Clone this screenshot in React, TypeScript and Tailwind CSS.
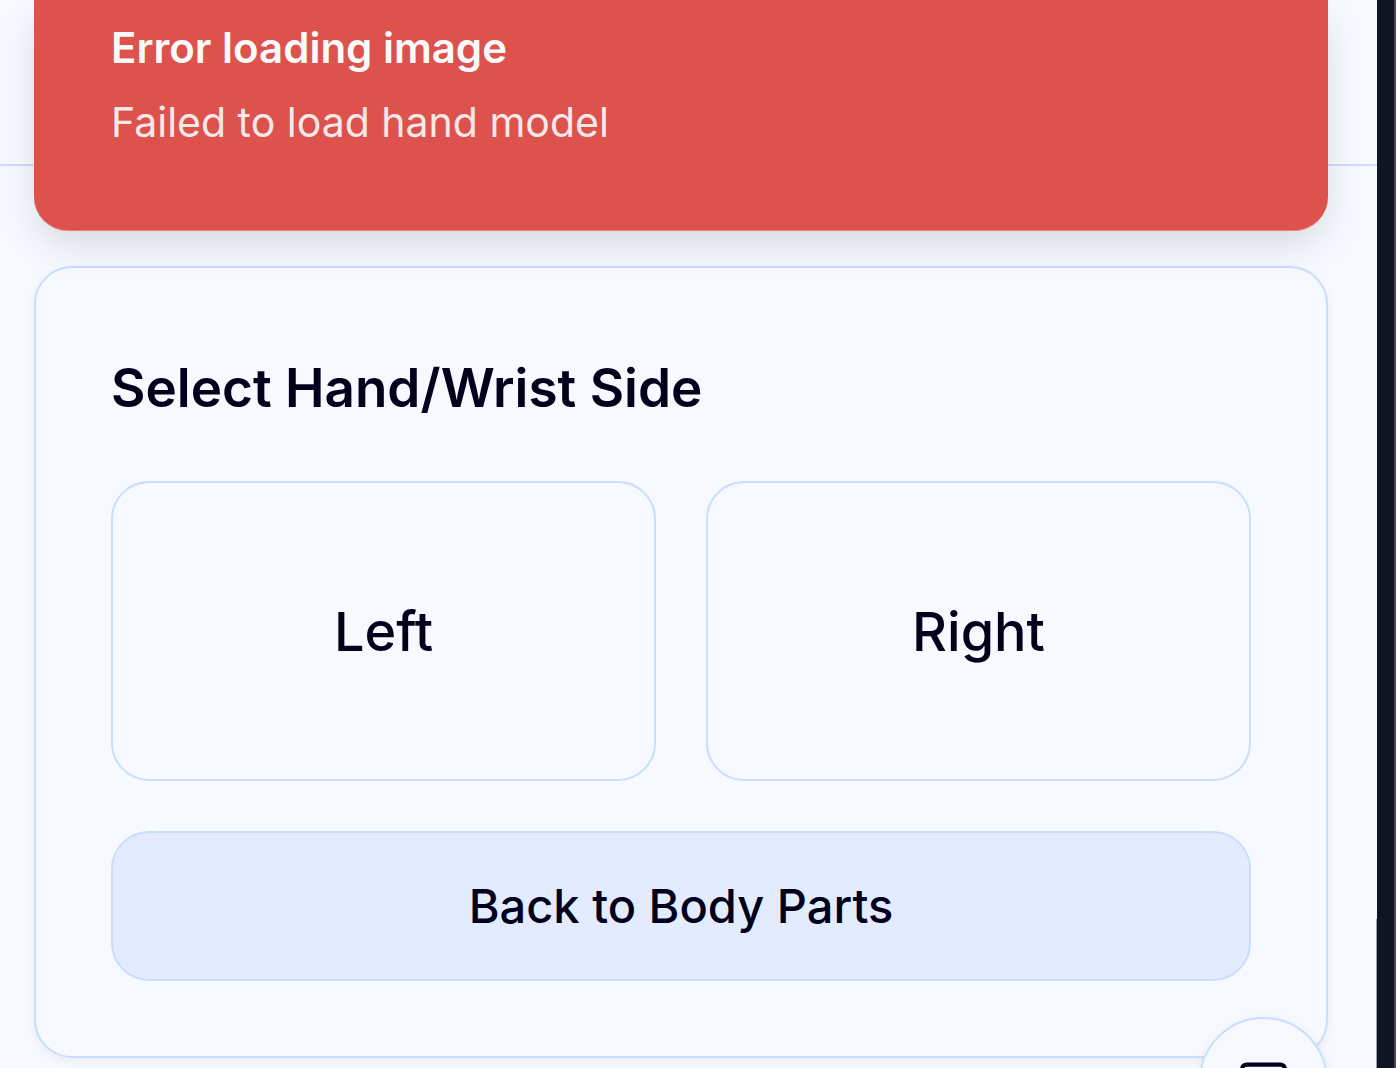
import { Mail } from "lucide-react";

function SideButton({ label }: { label: string }) {
  return (
    <button className="h-[300px] rounded-[38px] border-2 border-[#cbddfc] text-[54px] font-medium">{label}</button>
  );
}

export default function App() {
  return (
    <div className="relative flex h-screen overflow-hidden bg-[#f6faff] font-['Inter',sans-serif] text-[#01011c]">
      <main className="relative min-w-0 flex-1">
        <header className="h-[166px] border-b-2 border-[#cbddfc]" />
        <div role="alert" className="absolute top-0 right-[49px] left-[34px] h-[231px] rounded-b-[34px] border-b border-[#e4817d] bg-[#de524d] px-[77px] pt-5 text-[#fafafa] shadow-[0_16px_40px_-6px_rgba(0,0,0,0.15)]">
          <p className="text-[42px] leading-[56px] font-semibold">Error loading image</p>
          <p className="mt-[18px] text-[41px] leading-[56px] opacity-90">Failed to load hand model</p>
        </div>
        <section className="mt-[100px] mr-[49px] ml-[34px] rounded-[38px] border-2 border-[#cbddfc] px-[75px] pt-[84px] pb-[75px] shadow-[0_3px_8px_rgba(0,0,0,0.06)]">
          <h2 className="text-[53px] leading-[72px] font-semibold">Select Hand/Wrist Side</h2>
          <div className="mt-[57px] grid grid-cols-2 gap-[50px]">
            <SideButton label="Left" />
            <SideButton label="Right" />
          </div>
          <button className="mt-[50px] h-[150px] w-full rounded-[38px] border-2 border-[#cbddfc] bg-[#e3ecfe] text-[47px] font-medium">
            Back to Body Parts
          </button>
        </section>
        <button
          aria-label="Send a message"
          className="absolute right-[49px] -bottom-[78px] flex size-[129px] items-center justify-center rounded-full border-2 border-[#cbddfc] bg-[#f6f9ff] shadow-[0_4px_12px_rgba(0,0,0,0.08)]"
        >
          <Mail className="size-[51px]" />
        </button>
        <div className="absolute right-0 bottom-0 h-[149px] w-px bg-[#9c9fa9]" />
      </main>
      <aside className="w-[19px] shrink-0 border-r-2 border-[#434652] bg-[#0f1523]" />
    </div>
  );
}
